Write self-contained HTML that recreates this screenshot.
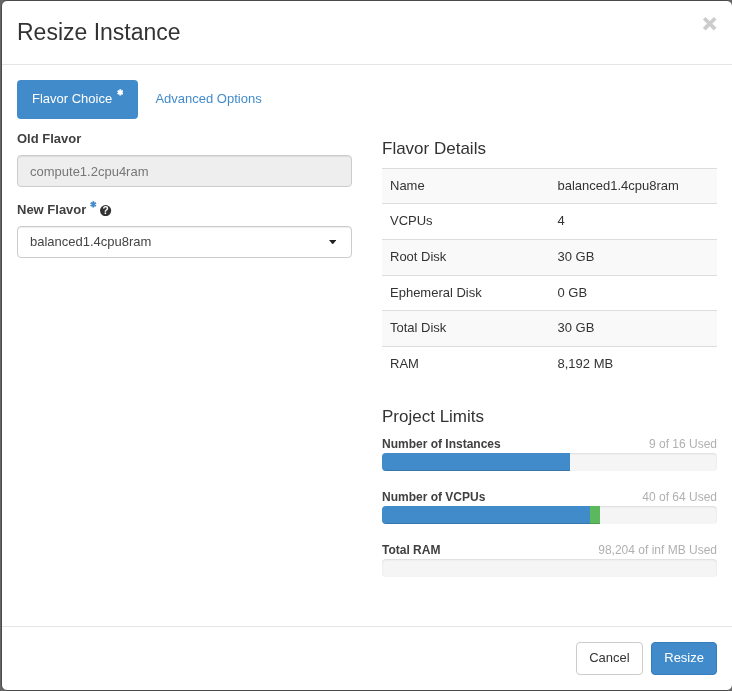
<!DOCTYPE html>
<html lang="en">
<head>
<meta charset="utf-8">
<title>Resize Instance</title>
<style>
*{box-sizing:border-box}
html,body{margin:0;padding:0}
body{width:732px;height:691px;overflow:hidden;background:#666;font-family:"Liberation Sans",Arial,sans-serif;font-size:13px;line-height:1.42857143;color:#333;position:relative}
.modal{will-change:transform;position:absolute;left:1px;top:0;width:732px;height:691px;background:#fff;border:1px solid #4a4a4a;border-radius:6px;overflow:hidden}
.hdr{height:64px;padding:15px;border-bottom:1px solid #e5e5e5;position:relative}
.hdr h3{margin:0;font-size:23px;font-weight:400;line-height:1.42857143;color:#333}
.close{position:absolute;left:699.95px;top:14.85px;width:15.4px;height:15.4px}
.body{position:relative;height:561px;padding:15px}
.pills{list-style:none;margin:0;padding:0;display:flex}
.pills li{height:39px;padding:10px 15px;border-radius:4px;color:#428bca;white-space:nowrap}
.pills li+li{margin-left:2px}
.pills li.on{background:#428bca;color:#fff}
.req{display:inline-block;position:relative;top:-6.8px;margin-left:1px}
.row{display:flex;margin:0 -15px}
.col{width:365px;padding:0 15px}
label{display:block;font-weight:700;color:#404040;margin:0 0 6px;line-height:18.57px}
.fg{margin-bottom:14.43px}
.fc{display:block;width:100%;height:32px;padding:7px 12px 5px;border:1px solid #ccc;border-radius:4px;font-size:13px;line-height:18px;color:#555;background:#fff;box-shadow:inset 0 1px 1px rgba(0,0,0,.075);position:relative}
.fc.ro{background:#eee;color:#777}
h4{font-size:17px;font-weight:400;margin:0;line-height:1.1;color:#333}
.tr{display:flex;border-top:1px solid #ddd;line-height:18.57px}
.tr.odd{background:#f9f9f9}
.tr span{display:block;width:167.5px;padding:8px 8px 0}
.q{font-size:12px;line-height:17.14px;display:flex;justify-content:space-between}
.q b{font-weight:700;color:#404040}
.q span{color:#b0b0b0}
.pg{height:18px;margin-bottom:18px;background:#f5f5f5;border-radius:4px;box-shadow:inset 0 1px 2px rgba(0,0,0,.1);overflow:hidden;display:flex}
.pg i{display:block;height:100%;background:#428bca;box-shadow:inset 0 -1px 0 rgba(0,0,0,.15)}
.pg i.g{background:#5cb85c}
.ftr{height:65px;border-top:1px solid #e5e5e5;padding:15px;text-align:right}
.btn{display:inline-block;height:32.57px;padding:6px 12px;border:1px solid #ccc;border-radius:4px;font-size:13px;line-height:18.57px;color:#333;background:#fff;vertical-align:top}
.btn.p{background:#428bca;border-color:#357ebd;color:#fff;margin-left:5px}
</style>
</head>
<body>
<div class="modal">
  <div class="hdr">
    <h3>Resize Instance</h3>
    <svg class="close" viewBox="0 0 14 14"><path d="M2 2L12 12M12 2L2 12" stroke="#ccc" stroke-width="3.4" fill="none"/></svg>
  </div>
  <div class="body">
    <ul class="pills">
      <li class="on">Flavor Choice <svg class="req" width="6.6" height="6.8" viewBox="0 0 13 14"><path d="M6.5 0.6V13.4M1 3.8L12 10.2M1 10.2L12 3.8" stroke="currentColor" stroke-width="3.9" stroke-linecap="butt" fill="none"/></svg></li>
      <li>Advanced Options</li>
    </ul>
    <div class="row" style="margin-top:11.4px">
      <div class="col">
        <div class="fg">
          <label>Old Flavor</label>
          <div class="fc ro">compute1.2cpu4ram</div>
        </div>
        <div class="fg">
          <label>New Flavor <svg class="req" style="color:#428bca;margin-left:0.2px" width="6.6" height="6.8" viewBox="0 0 13 14"><path d="M6.5 0.6V13.4M1 3.8L12 10.2M1 10.2L12 3.8" stroke="currentColor" stroke-width="3.9" stroke-linecap="butt" fill="none"/></svg> <svg width="11.2" height="11.2" viewBox="0 0 11 11" style="vertical-align:-1.7px"><circle cx="5.5" cy="5.5" r="5.5" fill="#333"/><text x="5.6" y="8.9" font-size="10" font-weight="700" text-anchor="middle" fill="#fff" font-family="Liberation Sans, sans-serif">?</text></svg></label>
          <div class="fc" style="padding-top:6px;color:#444">balanced1.4cpu8ram<svg width="7.4" height="4.4" viewBox="0 0 8 4" preserveAspectRatio="none" style="position:absolute;right:14.7px;top:12.6px"><path d="M0 0h8L4 4z" fill="#222"/></svg></div>
        </div>
      </div>
      <div class="col">
        <h4 style="margin-top:10px;margin-bottom:8.9px">Flavor Details</h4>
        <div class="tbl">
          <div class="tr odd" style="height:35px"><span>Name</span><span>balanced1.4cpu8ram</span></div>
          <div class="tr" style="height:36px"><span>VCPUs</span><span>4</span></div>
          <div class="tr odd" style="height:36px"><span>Root Disk</span><span>30 GB</span></div>
          <div class="tr" style="height:35px"><span>Ephemeral Disk</span><span>0 GB</span></div>
          <div class="tr odd" style="height:36px"><span>Total Disk</span><span>30 GB</span></div>
          <div class="tr" style="height:36px"><span>RAM</span><span>8,192 MB</span></div>
        </div>
        <h4 style="margin-top:26px;margin-bottom:9.2px">Project Limits</h4>
        <div class="q"><b>Number of Instances</b><span>9 of 16 Used</span></div>
        <div class="pg"><i style="width:188px"></i></div>
        <div class="q"><b>Number of VCPUs</b><span>40 of 64 Used</span></div>
        <div class="pg"><i style="width:208px"></i><i class="g" style="width:10px"></i></div>
        <div class="q"><b>Total RAM</b><span>98,204 of inf MB Used</span></div>
        <div class="pg"></div>
      </div>
    </div>
  </div>
  <div class="ftr"><span class="btn">Cancel</span> <span class="btn p">Resize</span></div>
</div>
</body>
</html>
